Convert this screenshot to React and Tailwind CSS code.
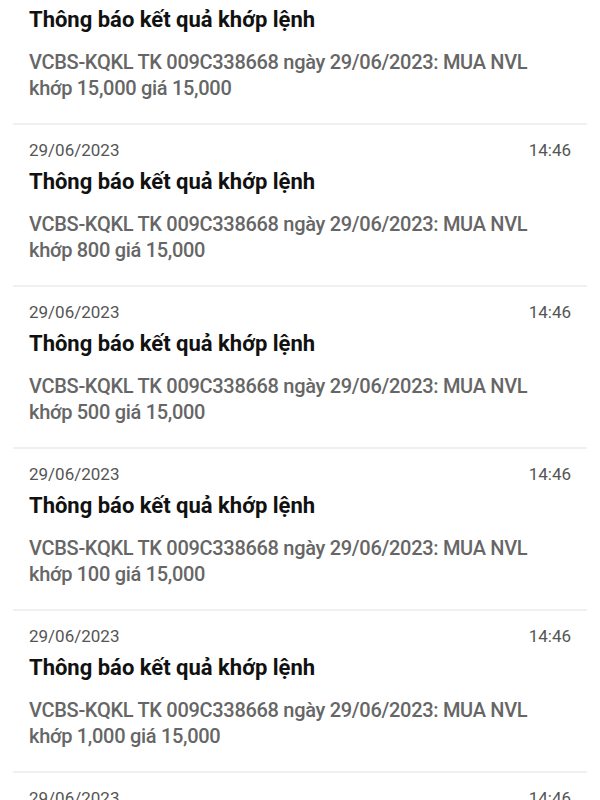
const items = [
  { qty: '15,000' },
  { qty: '800' },
  { qty: '500' },
  { qty: '100' },
  { qty: '1,000' },
  { qty: '2,000' },
];

function NotificationItem({ qty }) {
  return (
    <div className="mx-[13px] px-[16px] pt-[14px] pb-[22px] border-b-2 border-[#f0f0f0]">
      <div className="flex justify-between items-baseline text-[17px] leading-[22px] text-[#555]">
        <span>29/06/2023</span>
        <span>14:46</span>
      </div>
      <div className="mt-[6px] text-[22px] leading-[30px] font-bold text-[#111]">
        Thông báo kết quả khớp lệnh
      </div>
      <div className="mt-[14px] text-[20px] leading-[26px] font-medium tracking-[-0.3px] text-[#666]">
        VCBS-KQKL TK 009C338668 ngày 29/06/2023: MUA NVL
        <br />
        khớp {qty} giá 15,000
      </div>
    </div>
  );
}

export default function App() {
  return (
    <div className="w-[600px] h-[800px] overflow-hidden bg-white font-['Roboto',sans-serif]">
      <div className="-mt-[37px]">
        {items.map((it, i) => (
          <NotificationItem key={i} qty={it.qty} />
        ))}
      </div>
    </div>
  );
}
